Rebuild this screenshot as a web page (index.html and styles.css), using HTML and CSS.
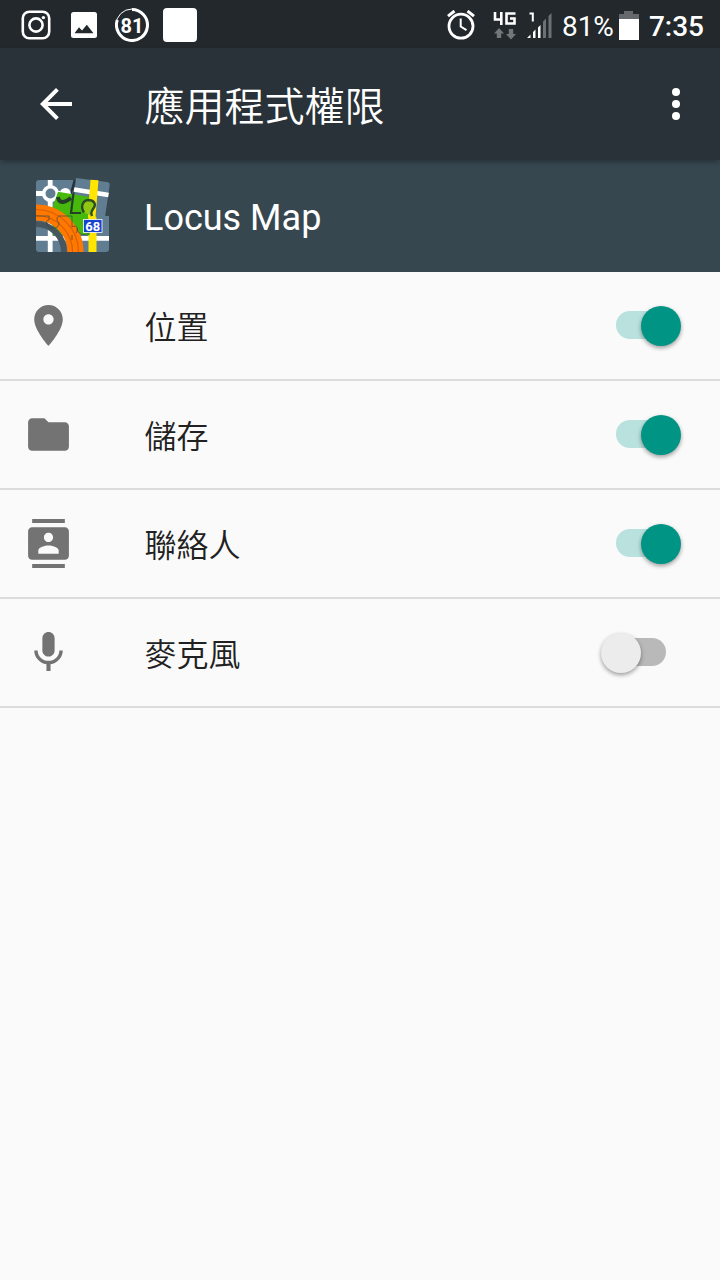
FILE: index.html
```html
<!DOCTYPE html>
<html lang="zh-Hant">
<head>
  <meta charset="UTF-8" />
  <meta name="viewport" content="width=device-width, initial-scale=1.0" />
  <title>應用程式權限</title>
  <link rel="stylesheet" href="styles.css">
</head>
<body>
  <div class="status-bar">
    <div class="notifications">
      <svg width="30" height="30" viewBox="0 0 30 30" fill="none" stroke="#fff">
        <rect x="1.8" y="1.8" width="26.4" height="26.4" rx="6.5" stroke-width="2.6"/>
        <circle cx="15" cy="15" r="6.6" stroke-width="2.6"/>
        <circle cx="22.4" cy="7.6" r="1.7" fill="#fff" stroke="none"/>
      </svg>
      <svg width="26" height="26" viewBox="0 0 26 26">
        <rect width="26" height="26" rx="2.5" fill="#fff"/>
        <path d="M3.5 21.3L8 15.2l3 3.4L15.8 12.8l6.7 8.5z" fill="#22282c"/>
      </svg>
      <div class="battery-ring">
        <svg width="34" height="34" viewBox="0 0 34 34" fill="none" stroke="#fff">
          <circle cx="17" cy="17" r="16" stroke-width="1"/>
          <path d="M17 1.5A15.5 15.5 0 1 1 2.3 12" stroke-width="3"/>
        </svg>
        <span>81</span>
      </div>
      <div class="blank-app"></div>
    </div>
    <div class="system">
      <svg class="alarm" width="28" height="30" viewBox="0 0 28 30" fill="none" stroke="#fff">
        <circle cx="14" cy="16.2" r="12" stroke-width="2.8"/>
        <path d="M13.7 8.5v8l5.8 3.7" stroke-width="2"/>
        <path d="M1 6.2L7.5 1M27 6.2L20.5 1" stroke-width="3"/>
      </svg>
      <svg class="network" width="24" height="28" viewBox="0 0 24 28">
        <path d="M2 0v7.5h7M8.3 0v13M22.5 1.5h-9v10h8v-5h-4.5" fill="none" stroke="#fff" stroke-width="2.6"/>
        <path d="M6 16l5 5.5H8.2V26H3.8v-4.5H1zM18 27.5l-5-5.5h2.8v-5h4.4v5H23z" fill="#73777a"/>
      </svg>
      <svg class="signal" width="25" height="27" viewBox="0 0 25 27">
        <path d="M2.5 1.5h3.3v8" fill="none" stroke="#fff" stroke-width="2"/>
        <path d="M0 26l3.5-3.5V26zM6 26v-6l2.5-2.5V26zM11 26V15.5l2.5-2.5v13z" fill="#fff"/>
        <path d="M16 26V9.5L19 6.5V26zM21.5 26V4L24.5 1v25z" fill="#6d7174"/>
      </svg>
      <span class="percent">81%</span>
      <svg class="battery" width="20" height="30" viewBox="0 0 20 30">
        <path d="M5 0h9v3h6v6H0V3h5z" fill="#65696c"/>
        <path d="M0 8h20v21H0z" fill="#fff"/>
      </svg>
      <span class="clock">7:35</span>
    </div>
  </div>

  <header class="toolbar">
    <svg class="back" width="32" height="32" viewBox="0 0 32 32">
      <path d="M32 14H7.66L18.8 2.8 16 0 0 16l16 16 2.8-2.8L7.66 18H32z" fill="#fff"/>
    </svg>
    <h1>應用程式權限</h1>
    <svg class="more" width="8" height="32" viewBox="0 0 8 32" fill="#fff">
      <circle cx="4" cy="4" r="4"/>
      <circle cx="4" cy="16" r="4"/>
      <circle cx="4" cy="28" r="4"/>
    </svg>
  </header>

  <div class="app-header">
    <svg class="app-icon" width="76" height="76" viewBox="0 0 76 76">
      <!-- map tiles -->
      <path d="M4 3h34v36h36v33q0 3-3 3H4q-3 0-3-3V6q0-3 3-3z" fill="#607d91"/>
      <path d="M41 1l31 4q3 .5 2.7 3L70 40 37 36z" fill="#607d91"/>
      <path d="M38 5l2.5-2-3.5 14-2-1z" fill="#25313a"/>
      <!-- white roads -->
      <path d="M15.2 3v72M1 16.5h24M1 61.3h73" fill="none" stroke="#fff" stroke-width="4.8"/>
      <path d="M39 12.5l34.5 5.5" stroke="#fff" stroke-width="4.8"/>
      <circle cx="15.5" cy="16.5" r="6.8" fill="#607d91" stroke="#fff" stroke-width="3.6"/>
      <circle cx="30.3" cy="16.5" r="5.5" fill="#fff"/>
      <!-- yellow road -->
      <path d="M59.5 3l-3 37 1 2v33" fill="none" stroke="#ffe500" stroke-width="8"/>
      <!-- forest piece -->
      <path d="M23 14.7L54 20l-1 19 2 19H17.7V30z" fill="#47b80c"/>
      <path d="M23 20c1 8 8 5 13 1" fill="none" stroke="#243f28" stroke-width="4"/>
      <path d="M38.5 16l-2.5 20h10" fill="none" stroke="#243f28" stroke-width="2.2"/>
      <path d="M49 35.5c-4-6-1-12 4-12.5 6 0 9 4 5 9-2 3-2 4-1 7" fill="#8fc812" stroke="#2c4c26" stroke-width="2.4"/>
      <!-- highway -->
      <path d="M1 47a28 28 0 0 1 28 28" fill="none" stroke="#47575f" stroke-width="6"/>
      <path d="M1 35.5A39.5 39.5 0 0 1 40.5 75" fill="none" stroke="#ff7800" stroke-width="16"/>
      <path d="M1 32.5A42.5 42.5 0 0 1 43.5 75M1 38.5A36.5 36.5 0 0 1 37.5 75" fill="none" stroke="#d95d04" stroke-width="1.2"/>
      <path d="M1 39h13v4c-4 0-3 5 0 7 4 3 10 1 10-4-4-4-1-7 0-7h13v11c5-3 7 2 4 6M37 58v5M42 51c0 8 12 9 14 2" fill="none" stroke="#34444c" stroke-width=".9" opacity=".75"/>
      <rect x="48.5" y="42.5" width="18.5" height="13" fill="#1743cf" stroke="#fff" stroke-width=".8"/>
      <text class="road-sign" x="57.8" y="53.6" text-anchor="middle">68</text>
    </svg>
    <span class="app-name">Locus Map</span>
  </div>

  <main class="permissions">
    <div class="permission">
      <svg class="icon" viewBox="0 0 24 24"><path d="M12 2C8.13 2 5 5.13 5 9c0 5.25 7 13 7 13s7-7.75 7-13c0-3.87-3.13-7-7-7zm0 9.5c-1.38 0-2.5-1.12-2.5-2.5s1.12-2.5 2.5-2.5 2.5 1.12 2.5 2.5-1.12 2.5-2.5 2.5z"/></svg>
      <span class="label">位置</span>
      <div class="switch on"><div class="thumb"></div></div>
    </div>
    <div class="permission">
      <svg class="icon" viewBox="0 0 24 24"><path d="M10 4H4c-1.1 0-1.99.9-1.99 2L2 18c0 1.1.9 2 2 2h16c1.1 0 2-.9 2-2V8c0-1.1-.9-2-2-2h-8l-2-2z"/></svg>
      <span class="label">儲存</span>
      <div class="switch on"><div class="thumb"></div></div>
    </div>
    <div class="permission">
      <svg class="icon" viewBox="0 0 24 24"><path d="M20 0H4v2h16V0zM4 24h16v-2H4v2zM20 4H4c-1.1 0-2 .9-2 2v12c0 1.1.9 2 2 2h16c1.1 0 2-.9 2-2V6c0-1.1-.9-2-2-2zm-8 2.75c1.24 0 2.25 1.01 2.25 2.25s-1.01 2.25-2.25 2.25S9.75 10.24 9.75 9 10.76 6.75 12 6.75zM17 17H7v-1.5c0-1.67 3.33-2.5 5-2.5s5 .83 5 2.5V17z"/></svg>
      <span class="label">聯絡人</span>
      <div class="switch on"><div class="thumb"></div></div>
    </div>
    <div class="permission">
      <svg class="icon" viewBox="0 0 24 24"><path d="M12 14c1.66 0 2.99-1.34 2.99-3L15 5c0-1.66-1.34-3-3-3S9 3.34 9 5v6c0 1.66 1.34 3 3 3zm5.3-3c0 3-2.54 5.1-5.3 5.1S6.7 14 6.7 11H5c0 3.41 2.72 6.23 6 6.72V21h2v-3.28c3.28-.48 6-3.3 6-6.72h-1.7z"/></svg>
      <span class="label">麥克風</span>
      <div class="switch"><div class="thumb"></div></div>
    </div>
  </main>
</body>
</html>
```
FILE: styles.css
```css
:root {
  --status: #22282c;
  --toolbar: #283238;
  --header: #37474f;
  --bg: #fafafa;
  --divider: #dbdbdb;
  --accent: #009485;
}
* {
  box-sizing: border-box;
}
body {
  margin: 0;
  min-height: 100vh;
  background: var(--bg);
  color: #212121;
  font-family: Roboto, 'Noto Sans CJK TC', sans-serif;
}
svg {
  display: block;
  flex: none;
}
.status-bar {
  display: flex;
  justify-content: space-between;
  align-items: flex-start;
  height: 48px;
  padding: 0 16px 0 21px;
  background: var(--status);
  color: #fff;
}
.notifications {
  display: flex;
  align-items: center;
  gap: 14px;
  height: 50px;
}
.notifications svg:nth-child(2) {
  margin-left: 6px;
}
.battery-ring {
  display: grid;
  place-items: center;
  margin-left: 4px;
}
.battery-ring svg,
.battery-ring span {
  grid-area: 1 / 1;
}
.battery-ring span {
  padding-top: 1px;
  font-size: 20px;
  font-weight: 700;
  line-height: 24px;
}
.blank-app {
  width: 34px;
  height: 34px;
  border-radius: 4px;
  background: #fff;
}
.system {
  display: flex;
  align-items: center;
  height: 50px;
}
.network {
  margin: 2px 0 0 18px;
}
.signal {
  margin: 1px 0 0 10px;
}
.percent {
  margin: 4px 0 0 10px;
  font-size: 28px;
  line-height: 46px;
}
.battery {
  margin: 1px 0 0 5px;
}
.clock {
  margin: 4px 0 0 10px;
  font-size: 28px;
  font-weight: 500;
  line-height: 46px;
}
.toolbar {
  position: relative;
  display: flex;
  align-items: center;
  height: 112px;
  padding: 0 40px;
  background: var(--toolbar);
  box-shadow: 0 3px 5px -1px rgba(0, 0, 0, 0.3);
  color: #fff;
}
.toolbar h1 {
  flex: 1;
  margin: 7px 0 0 72.5px;
  font-size: 40px;
  font-weight: 350;
  line-height: 60px;
}
.app-header {
  display: flex;
  align-items: center;
  height: 112px;
  padding: 0 35px;
  background: var(--header);
  color: #fff;
}
.app-icon {
  margin-top: -2px;
}
.road-sign {
  fill: #fff;
  font-size: 13px;
  font-weight: 700;
}
.app-name {
  margin: 4px 0 0 33px;
  font-size: 36px;
  line-height: 48px;
}
.permission {
  display: flex;
  align-items: center;
  height: 109px;
  padding: 0 54px 0 24px;
  border-bottom: 2px solid var(--divider);
}
.icon {
  width: 49px;
  height: 49px;
  fill: #737373;
}
.label {
  flex: 1;
  margin: 5px 0 0 71.5px;
  font-size: 32px;
  font-weight: 350;
  line-height: 48px;
}
.switch {
  display: flex;
  align-items: center;
  width: 50px;
  height: 28px;
  margin-top: -1px;
  border-radius: 14px;
  background: #b9b9b9;
}
.thumb {
  flex: none;
  width: 40px;
  height: 40px;
  margin: 1px 0 0 -15px;
  border-radius: 50%;
  background: #ececec;
  box-shadow: 0 2px 4px rgba(0, 0, 0, 0.38);
}
.switch.on {
  background: #b9e1dd;
}
.switch.on .thumb {
  margin-left: 25px;
  background: var(--accent);
}
```
